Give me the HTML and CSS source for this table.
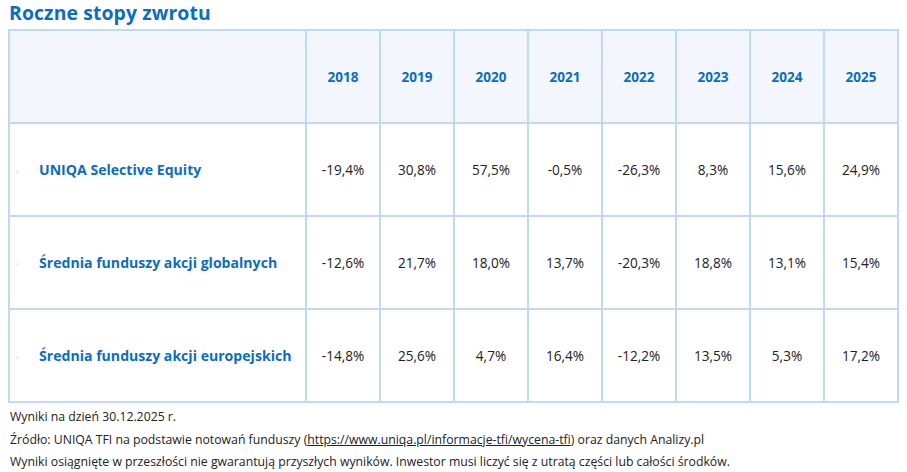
FILE: index.html
```html
<!DOCTYPE html>
<html lang="pl">
<head>
<meta charset="utf-8">
<title>Roczne stopy zwrotu</title>
<link rel="stylesheet" href="styles.css">
</head>
<body>
<h1 class="title">Roczne stopy zwrotu</h1>
<table class="returns">
  <thead>
    <tr>
      <th class="name-col"></th>
      <th>2018</th><th>2019</th><th>2020</th><th>2021</th><th>2022</th><th>2023</th><th>2024</th><th>2025</th>
    </tr>
  </thead>
  <tbody>
    <tr>
      <td class="fund"><span class="dot"></span>UNIQA Selective Equity</td>
      <td>-19,4%</td><td>30,8%</td><td>57,5%</td><td>-0,5%</td><td>-26,3%</td><td>8,3%</td><td>15,6%</td><td>24,9%</td>
    </tr>
    <tr>
      <td class="fund"><span class="dot"></span>Średnia funduszy akcji globalnych</td>
      <td>-12,6%</td><td>21,7%</td><td>18,0%</td><td>13,7%</td><td>-20,3%</td><td>18,8%</td><td>13,1%</td><td>15,4%</td>
    </tr>
    <tr>
      <td class="fund"><span class="dot"></span>Średnia funduszy akcji europejskich</td>
      <td>-14,8%</td><td>25,6%</td><td>4,7%</td><td>16,4%</td><td>-12,2%</td><td>13,5%</td><td>5,3%</td><td>17,2%</td>
    </tr>
  </tbody>
</table>
<div class="notes">
  <p>Wyniki na dzień 30.12.2025 r.</p>
  <p>Źródło: UNIQA TFI na podstawie notowań funduszy (<a href="https://www.uniqa.pl/informacje-tfi/wycena-tfi">https://www.uniqa.pl/informacje-tfi/wycena-tfi</a>) oraz danych Analizy.pl</p>
  <p>Wyniki osiągnięte w przeszłości nie gwarantują przyszłych wyników. Inwestor musi liczyć się z utratą części lub całości środków.</p>
</div>
</body>
</html>
```
FILE: styles.css
```css
html, body {
  margin: 0;
  padding: 0;
  background: #ffffff;
}
body {
  font-family: "Open Sans", "Liberation Sans", sans-serif;
  color: #222222;
  width: 907px;
  height: 472px;
  overflow: hidden;
}
.title {
  margin: 0;
  padding: 1px 0 0 9px;
  height: 29px;
  box-sizing: border-box;
  font-size: 19.4px;
  font-weight: 700;
  color: #0b6dbf;
  line-height: 24px;
  letter-spacing: 0.1px;
}
.returns {
  margin-left: 8px;
  width: 890px;
  border-collapse: collapse;
  table-layout: fixed;
}
.returns th, .returns td {
  border: 2px solid #c0daf4;
  text-align: center;
  height: 91px;
  padding: 0;
}
.returns th {
  background: #f3f7fd;
  color: #0b6dbf;
  font-size: 13.5px;
  font-weight: 700;
  width: 72px;
}
.returns th.name-col {
  width: 295px;
}
.returns td {
  font-size: 13.6px;
  color: #222222;
}
.returns td.fund {
  text-align: left;
  padding-left: 6px;
  color: #0b6dbf;
  font-weight: 700;
  font-size: 14.1px;
}
.dot {
  display: inline-block;
  width: 3px;
  height: 3px;
  border-radius: 50%;
  background: #e6eef8;
  margin-right: 20px;
  vertical-align: middle;
}
.notes {
  padding: 3px 0 0 10px;
  font-size: 12.25px;
  line-height: 22.5px;
  color: #222222;
}
.notes p {
  margin: 0;
}
.notes a {
  color: #222222;
  text-decoration: underline;
}
```
